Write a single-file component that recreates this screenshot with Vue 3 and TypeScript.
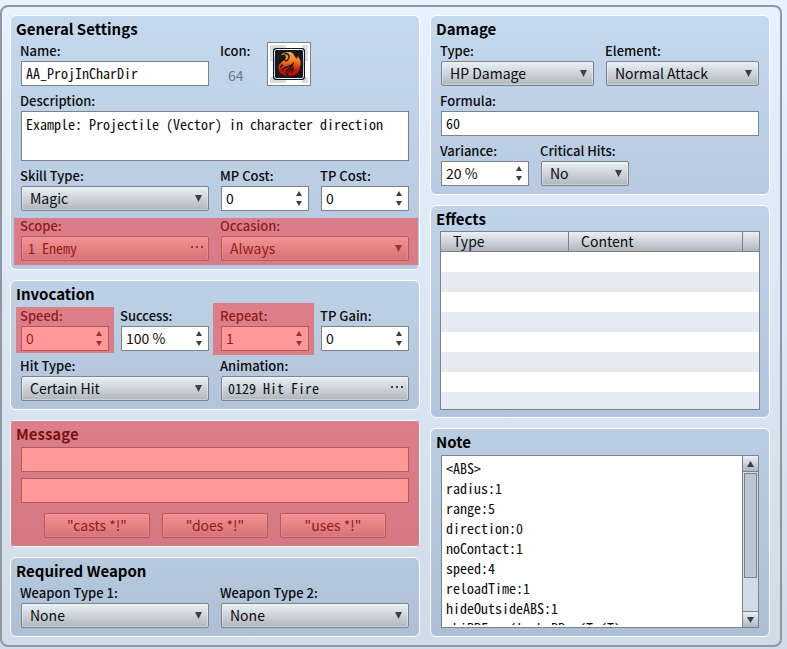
<script setup lang="ts">
import { computed, ref } from 'vue'

interface Field { id: string; label: string; value: string }

const name = ref('AA_ProjInCharDir')
const description = ref('Example: Projectile (Vector) in character direction')
const iconIndex = ref(64)
const formula = ref('60')
const messages = ref(['', ''])
const templates = ['"casts *!"', '"does *!"', '"uses *!"']

const mpCost = ref<Field>({ id: 'mp-cost', label: 'MP Cost:', value: '0' })
const tpCost = ref<Field>({ id: 'tp-cost', label: 'TP Cost:', value: '0' })
const speed = ref<Field>({ id: 'speed', label: 'Speed:', value: '0' })
const success = ref<Field>({ id: 'success', label: 'Success:', value: '100 %' })
const repeat = ref<Field>({ id: 'repeat', label: 'Repeat:', value: '1' })
const tpGain = ref<Field>({ id: 'tp-gain', label: 'TP Gain:', value: '0' })
const variance = ref<Field>({ id: 'variance', label: 'Variance:', value: '20 %' })

const costs = computed(() => [
  { field: mpCost.value, mark: '' },
  { field: tpCost.value, mark: '' },
])
const invocation = computed(() => [
  { field: speed.value, mark: 'marked marked-speed' },
  { field: success.value, mark: '' },
  { field: repeat.value, mark: 'marked marked-repeat' },
  { field: tpGain.value, mark: '' },
])
const weapons = [
  { id: 'weapon-1', label: 'Weapon Type 1:' },
  { id: 'weapon-2', label: 'Weapon Type 2:' },
]
const effectRows = 8
const note = ref(`<ABS>
radius:1
range:5
direction:0
noContact:1
speed:4
reloadTime:1
hideOutsideABS:1
whiPPFrom(lock:PP,n(Tn(T)`)

function step(field: Field, delta: number) {
  const n = parseInt(field.value, 10) || 0
  const suffix = field.value.endsWith('%') ? ' %' : ''
  field.value = `${Math.max(0, n + delta)}${suffix}`
}
</script>

<template>
  <main class="frame">
    <div class="column">
      <section class="panel">
        <h2>General Settings</h2>
        <div class="body">
          <div class="row two">
            <div class="field">
              <label for="name">Name:</label>
              <input id="name" v-model="name" class="box mono" type="text">
            </div>
            <div class="icon-row">
              <div class="icon-info">
                <label for="icon">Icon:</label>
                <output for="icon">{{ iconIndex }}</output>
              </div>
              <button id="icon" class="icon-button" type="button" aria-label="Choose icon">
                <svg width="42" height="42" viewBox="0 0 42 42">
                  <defs>
                    <linearGradient id="flame" x1="0" y1="0" x2="0" y2="1">
                      <stop offset="0" stop-color="#f6b257" />
                      <stop offset=".35" stop-color="#f4801c" />
                      <stop offset=".6" stop-color="#e04312" />
                      <stop offset=".75" stop-color="#c8140c" />
                      <stop offset="1" stop-color="#bd0508" />
                    </linearGradient>
                    <linearGradient id="rim" x1="0" y1="0" x2="0" y2="1">
                      <stop offset="0" stop-color="#fff" />
                      <stop offset=".5" stop-color="#8fb9d0" />
                      <stop offset="1" stop-color="#f2f7fb" />
                    </linearGradient>
                  </defs>
                  <path fill="#dcdcdc" d="M2 2h16v16H2zM34 2h6v16h-6zM2 34h16v6H2zM34 34h6v6h-6z" />
                  <rect x="5" y="5" width="32" height="32" rx="3" fill="#0a1734" />
                  <rect x="6.5" y="6.5" width="29" height="29" rx="2" fill="#191919" stroke="url(#rim)" />
                  <path fill="url(#flame)" d="M13 12C15 9.500 19 8.500 22 9c4 1 4 4 6 6 1 1 2 0 1.500-2 2 1 1.500 3.500 3 4.500.5 4 0 5.500-1 7.500.5 1 0 3-1.500 4.500-2 2.500-5 3.500-8.500 3.500C15 33 10.500 30 10.500 25.500c0-5 3.500-6.500 6-8.500 2-2 2-5-.5-5.500-1.500 0-2 1-3 .5z" />
                  <path fill="none" stroke="#2a1411" stroke-width="1.500" stroke-linecap="round" d="M17 10.500c5 0 5 4.500 2.500 6.500-1 1-2 1-2.500 0M14 27c2-4 7-2 11-6-1 4-5 4-6.500 7-.5 2 0 3 1 4M21 29c0-2 2-2.500 4-4-.5 2 0 3-1.500 4.500M12.500 24c.5-1 1-2 2-2" />
                </svg>
              </button>
            </div>
          </div>
          <div class="field">
            <label for="description">Description:</label>
            <textarea id="description" v-model="description" class="box mono description"></textarea>
          </div>
          <div class="row two">
            <div class="field">
              <label for="skill-type">Skill Type:</label>
              <div class="select">
                <select id="skill-type"><option>Magic</option></select>
                <svg width="7" height="7"><path d="M0 0h7L3.500 7z" /></svg>
              </div>
            </div>
            <div class="row two">
              <div v-for="c in costs" :key="c.field.id" class="field">
                <label :for="c.field.id">{{ c.field.label }}</label>
                <div class="spin">
                  <input :id="c.field.id" v-model="c.field.value" type="text">
                  <div class="steps">
                    <button type="button" aria-label="Increase" @click="step(c.field, 1)"><svg width="6" height="5"><path d="M0 5h6L3 0z" /></svg></button>
                    <button type="button" aria-label="Decrease" @click="step(c.field, -1)"><svg width="6" height="5"><path d="M0 0h6L3 5z" /></svg></button>
                  </div>
                </div>
              </div>
            </div>
          </div>
          <div class="row two marked marked-scope">
            <div class="field">
              <label for="scope">Scope:</label>
              <button id="scope" class="raised picker mono" type="button">
                <span>1 Enemy</span>
                <svg width="12" height="3"><path d="M0 0h2v2H0zM5 0h2v2H5zM10 0h2v2h-2z" /></svg>
              </button>
            </div>
            <div class="field">
              <label for="occasion">Occasion:</label>
              <div class="select">
                <select id="occasion"><option>Always</option></select>
                <svg width="7" height="7"><path d="M0 0h7L3.500 7z" /></svg>
              </div>
            </div>
          </div>
        </div>
      </section>

      <section class="panel">
        <h2>Invocation</h2>
        <div class="body">
          <div class="row four">
            <div v-for="c in invocation" :key="c.field.id" class="field" :class="c.mark">
              <label :for="c.field.id">{{ c.field.label }}</label>
              <div class="spin">
                <input :id="c.field.id" v-model="c.field.value" type="text">
                <div class="steps">
                  <button type="button" aria-label="Increase" @click="step(c.field, 1)"><svg width="6" height="5"><path d="M0 5h6L3 0z" /></svg></button>
                  <button type="button" aria-label="Decrease" @click="step(c.field, -1)"><svg width="6" height="5"><path d="M0 0h6L3 5z" /></svg></button>
                </div>
              </div>
            </div>
          </div>
          <div class="row two">
            <div class="field">
              <label for="hit-type">Hit Type:</label>
              <div class="select">
                <select id="hit-type"><option>Certain Hit</option></select>
                <svg width="7" height="7"><path d="M0 0h7L3.500 7z" /></svg>
              </div>
            </div>
            <div class="field">
              <label for="animation">Animation:</label>
              <button id="animation" class="raised picker mono" type="button">
                <span>0129 Hit Fire</span>
                <svg width="12" height="3"><path d="M0 0h2v2H0zM5 0h2v2H5zM10 0h2v2h-2z" /></svg>
              </button>
            </div>
          </div>
        </div>
      </section>

      <section class="panel marked marked-panel">
        <h2>Message</h2>
        <div class="body messages">
          <input v-for="(m, i) in messages" :key="i" v-model="messages[i]" class="box mono" type="text" :aria-label="`Message line ${i + 1}`">
          <div class="templates">
            <button v-for="t in templates" :key="t" class="raised" type="button">{{ t }}</button>
          </div>
        </div>
      </section>

      <section class="panel">
        <h2>Required Weapon</h2>
        <div class="body">
          <div class="row two">
            <div v-for="w in weapons" :key="w.id" class="field">
              <label :for="w.id">{{ w.label }}</label>
              <div class="select">
                <select :id="w.id"><option>None</option></select>
                <svg width="7" height="7"><path d="M0 0h7L3.500 7z" /></svg>
              </div>
            </div>
          </div>
        </div>
      </section>
    </div>

    <div class="column">
      <section class="panel">
        <h2>Damage</h2>
        <div class="body">
          <div class="row two">
            <div class="field">
              <label for="damage-type">Type:</label>
              <div class="select">
                <select id="damage-type"><option>HP Damage</option></select>
                <svg width="7" height="7"><path d="M0 0h7L3.500 7z" /></svg>
              </div>
            </div>
            <div class="field">
              <label for="element">Element:</label>
              <div class="select">
                <select id="element"><option>Normal Attack</option></select>
                <svg width="7" height="7"><path d="M0 0h7L3.500 7z" /></svg>
              </div>
            </div>
          </div>
          <div class="field">
            <label for="formula">Formula:</label>
            <input id="formula" v-model="formula" class="box mono" type="text">
          </div>
          <div class="row small">
            <div class="field">
              <label :for="variance.id">{{ variance.label }}</label>
              <div class="spin">
                <input :id="variance.id" v-model="variance.value" type="text">
                <div class="steps">
                  <button type="button" aria-label="Increase" @click="step(variance, 1)"><svg width="6" height="5"><path d="M0 5h6L3 0z" /></svg></button>
                  <button type="button" aria-label="Decrease" @click="step(variance, -1)"><svg width="6" height="5"><path d="M0 0h6L3 5z" /></svg></button>
                </div>
              </div>
            </div>
            <div class="field">
              <label for="critical">Critical Hits:</label>
              <div class="select">
                <select id="critical"><option>No</option></select>
                <svg width="7" height="7"><path d="M0 0h7L3.500 7z" /></svg>
              </div>
            </div>
          </div>
        </div>
      </section>

      <section class="panel effects">
        <h2>Effects</h2>
        <div class="table-box">
          <table>
            <colgroup><col class="type-col"><col><col class="end-col"></colgroup>
            <thead><tr><th>Type</th><th>Content</th><th></th></tr></thead>
            <tbody><tr v-for="r in effectRows" :key="r"><td></td><td></td><td></td></tr></tbody>
          </table>
        </div>
      </section>

      <section class="panel note-panel">
        <h2><label for="note">Note</label></h2>
        <div class="note-box">
          <textarea id="note" v-model="note" class="mono" wrap="off"></textarea>
          <div class="scrollbar">
            <button type="button" aria-label="Scroll up"><svg width="7" height="6"><path d="M0 6h7L3.500 0z" /></svg></button>
            <div class="track"><div class="thumb"></div></div>
            <button type="button" aria-label="Scroll down"><svg width="7" height="6"><path d="M0 0h7L3.500 6z" /></svg></button>
          </div>
        </div>
      </section>
    </div>
  </main>
</template>

<style>
body {
  min-height: 100vh;
  background: linear-gradient(#e6f2ff, #cfdbe7);
}
#app {
  display: flow-root;
}
</style>

<style scoped>
.frame, .frame * {
  box-sizing: border-box;
}
.frame {
  display: grid;
  grid-template-columns: 410fr 340fr;
  gap: 10px;
  margin: 5px 5px 2px 0;
  padding: 8px 10px 8px 8px;
  border: 2px solid #8f979f;
  border-radius: 8px;
  color: #0c0c0c;
  font-family: "Noto Sans CJK JP", "Noto Sans", sans-serif;
  font-size: 14px;
  line-height: 20px;
}
input, select, textarea, button {
  margin: 0;
  border: 0;
  padding: 0;
  min-width: 0;
  color: inherit;
  font: inherit;
}
input:focus, textarea:focus {
  outline: 0;
}
svg {
  display: block;
  fill: #3b4045;
}
.column {
  display: flex;
  flex-direction: column;
  gap: 10px;
  min-width: 0;
}
.panel {
  border: 1px solid #fff;
  border-radius: 6px;
  padding-bottom: 8px;
  background: linear-gradient(rgba(93, 137, 183, .24), rgba(90, 125, 170, .3));
}
h2 {
  margin: 0;
  padding: 0 5px;
  color: #000;
  font-size: 15px;
  font-weight: 700;
  line-height: 25px;
}
.body {
  display: flex;
  flex-direction: column;
  gap: 5px;
  padding: 0 10px;
}
.row {
  display: grid;
  gap: 12px;
}
.two {
  grid-template-columns: repeat(2, minmax(0, 1fr));
}
.four {
  grid-template-columns: repeat(4, minmax(0, 1fr));
}
.small {
  grid-template-columns: 88px 88px;
}
.field {
  display: flex;
  flex-direction: column;
}
.field label, .icon-info label {
  height: 20px;
  margin-left: -1px;
  font-size: 13px;
  font-weight: 500;
  white-space: nowrap;
}
.mono, input {
  padding-bottom: 2px;
}
.mono {
  font-family: "Noto Sans Mono CJK JP", "Noto Sans CJK JP", monospace;
  font-feature-settings: "hwid";
}
.box {
  width: 100%;
  height: 25px;
  border: 1px solid #7a828a;
  padding: 0 4px 2px;
  background: #fff;
}
.description {
  display: block;
  height: 50px;
  padding: 2px 4px;
  resize: none;
  overflow: hidden;
}
.select {
  display: grid;
  align-items: center;
}
.select > * {
  grid-area: 1 / 1;
}
.select svg {
  justify-self: end;
  margin-right: 7px;
  pointer-events: none;
}
select, .raised {
  height: 25px;
  border: 1px solid #7a828a;
  border-radius: 2px;
  background: linear-gradient(#e9f0f6, #afb6bd);
  box-shadow: inset 0 0 0 1px rgba(255, 255, 255, .35);
}
.raised {
  padding-bottom: 2px;
}
select {
  width: 100%;
  padding: 0 20px 2px 8px;
  appearance: none;
}
.picker {
  display: flex;
  align-items: center;
  justify-content: space-between;
  padding: 0 5px 2px 6px;
}
.spin {
  display: flex;
  height: 25px;
  border: 1px solid #7a828a;
  background: #fff;
}
.spin input {
  flex: 1;
  padding: 0 4px 2px;
  background: none;
}
.steps {
  display: flex;
  flex-direction: column;
  justify-content: center;
  gap: 5px;
  padding-right: 6px;
}
.steps button {
  background: none;
}
.icon-row {
  display: flex;
}
.icon-info {
  display: flex;
  flex-direction: column;
  width: 46px;
}
.icon-info output {
  padding: 4px 7px 0;
  color: #6d7780;
}
.icon-button {
  width: 44px;
  height: 44px;
  margin-top: 1px;
  border: 1px solid #7a828a;
  background: #fff;
}
.marked {
  position: relative;
  color: #2c1212;
}
.marked::after {
  content: "";
  position: absolute;
  background: rgba(255, 38, 38, .47);
  pointer-events: none;
}
.marked-scope::after {
  inset: 2px -9px -4px -7px;
}
.marked-speed::after {
  inset: 1px -5px -2px;
}
.marked-repeat::after {
  inset: -3px -5px -4px -8px;
}
.marked-panel::after {
  inset: 0;
}
.messages {
  gap: 6px;
  padding-top: 1px;
}
.templates {
  display: flex;
  justify-content: center;
  gap: 12px;
  padding-top: 4px;
}
.templates button {
  width: 106px;
}
.effects {
  padding-bottom: 7px;
}
.table-box {
  height: 179px;
  margin: 0 9px;
  border: 1px solid #7a828a;
  background: #fff;
  overflow: hidden;
}
table {
  width: 100%;
  border-collapse: separate;
  border-spacing: 0;
  table-layout: fixed;
}
.type-col {
  width: 128px;
}
.end-col {
  width: 16px;
}
th {
  height: 20px;
  border-right: 1px solid #7a828a;
  border-bottom: 1px solid #7a828a;
  padding: 0 12px;
  background: linear-gradient(#e9f0f6, #afb6bd);
  font-weight: 400;
  line-height: 19px;
  text-align: left;
}
th:last-child {
  border-right: 0;
  padding: 0;
}
td {
  height: 20px;
  padding: 0;
}
tbody tr:nth-child(even) {
  background: #e3eaf2;
}
.note-box {
  display: flex;
  height: 173px;
  margin: 1px 10px 0;
  border: 1px solid #7a828a;
  background: #fff;
}
.note-box textarea {
  flex: 1;
  margin: 2px 4px;
  padding: 0;
  background: none;
  resize: none;
  overflow: hidden;
}
.scrollbar {
  display: flex;
  flex-direction: column;
  width: 16px;
  border-left: 1px solid #7a828a;
  background: #cfdbe7;
}
.scrollbar button {
  display: grid;
  place-items: center;
  height: 15px;
  background: linear-gradient(#e9f0f6, #afb6bd);
}
.track {
  flex: 1;
  padding: 1px;
  border: solid #7a828a;
  border-width: 1px 0;
}
.thumb {
  height: 77%;
  border: 1px solid #7a828a;
  background: #bcc6d2;
}
</style>
